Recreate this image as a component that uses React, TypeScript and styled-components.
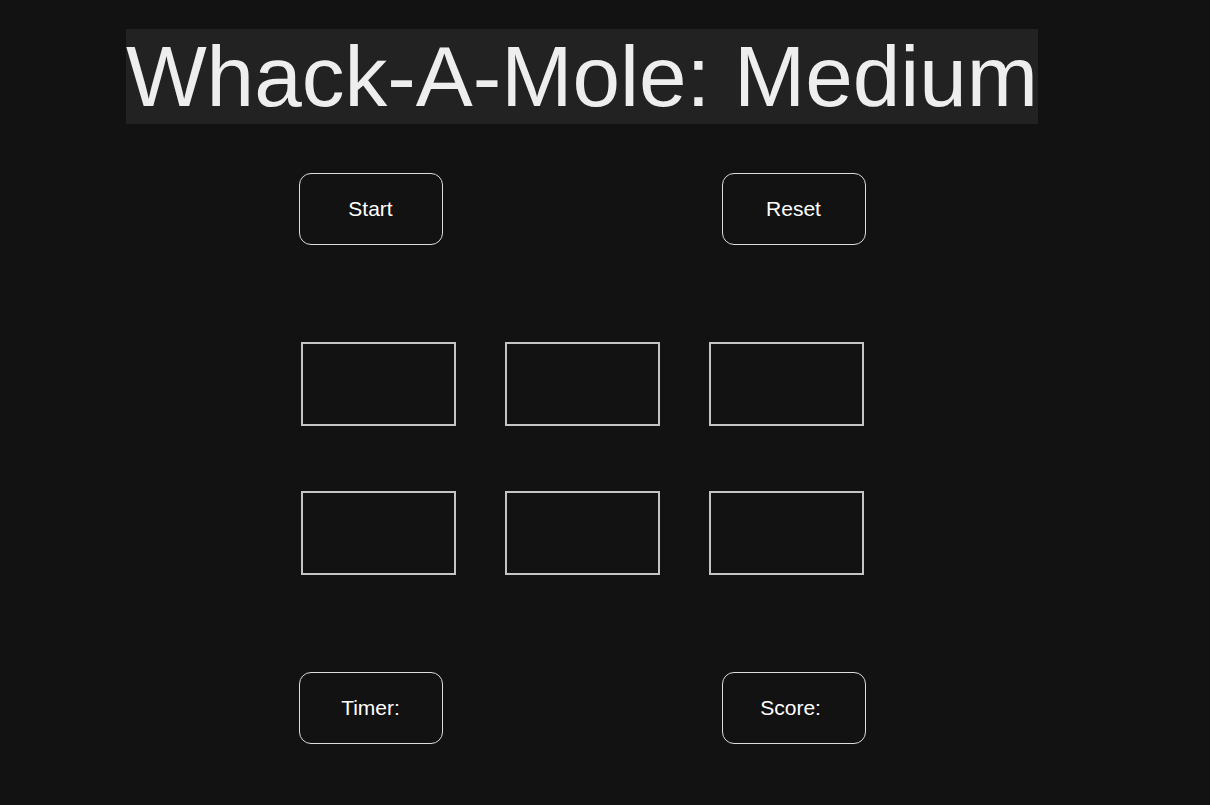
import React from "react";
import styled, { createGlobalStyle } from "styled-components";

const GlobalStyle = createGlobalStyle`
  html, body {
    margin: 0;
    padding: 0;
    background: #121212;
  }
  body {
    font-family: "Liberation Sans", Arial, sans-serif;
    color: #ffffff;
  }
`;

const Page = styled.main`
  width: 1164px;
  min-height: 805px;
  box-sizing: border-box;
  padding-top: 29px;
  display: flex;
  flex-direction: column;
  align-items: center;
`;

const TitleLine = styled.h1`
  margin: 0;
  height: 95px;
  font-size: 85.5px;
  line-height: 95px;
  font-weight: 400;
  text-align: center;
  white-space: nowrap;
`;

const TitleText = styled.span`
  background: #222222;
  color: #eeeeee;
`;

const Row = styled.div<{ $top: number }>`
  width: 567px;
  margin-top: ${(p) => p.$top}px;
  display: flex;
  justify-content: space-between;
`;

const Pill = styled.button`
  width: 144px;
  height: 72px;
  box-sizing: border-box;
  border: 1px solid #dddddd;
  border-radius: 12px;
  background: #121212;
  color: #ffffff;
  font-family: "Liberation Sans", Arial, sans-serif;
  font-size: 21px;
  padding: 0;
  display: flex;
  align-items: center;
  justify-content: center;
  cursor: pointer;
`;

const Stat = styled(Pill).attrs({ as: "div" })`
  cursor: default;
`;

const Board = styled.div`
  margin-top: 97px;
  display: grid;
  grid-template-columns: repeat(3, 155px);
  column-gap: 49px;
  row-gap: 65px;
`;

const Hole = styled.div`
  width: 155px;
  height: 84px;
  box-sizing: border-box;
  border: 2px solid #c4c4c4;
  background: #121212;
`;

export default function App() {
  const holes = [0, 1, 2, 3, 4, 5];
  return (
    <>
      <GlobalStyle />
      <Page>
        <TitleLine>
          <TitleText>Whack-A-Mole: Medium</TitleText>
        </TitleLine>
        <Row $top={49}>
          <Pill>Start</Pill>
          <Pill>Reset</Pill>
        </Row>
        <Board>
          {holes.map((h) => (
            <Hole key={h} />
          ))}
        </Board>
        <Row $top={97}>
          <Stat>Timer:</Stat>
          <Stat>Score:{"\u00a0"}</Stat>
        </Row>
      </Page>
    </>
  );
}
